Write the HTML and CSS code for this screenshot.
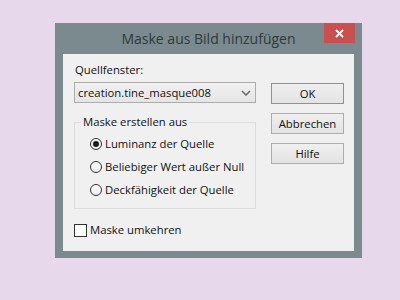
FILE: index.html
```html
<!DOCTYPE html>
<html lang="de">
<head>
    <meta charset="UTF-8">
    <title>Maske aus Bild hinzufügen</title>
    <link rel="stylesheet" href="styles.css">
</head>
<body>
    <div class="dialog">
        <div class="titlebar">
            <span class="title">Maske aus Bild hinzufügen</span>
            <span class="close">
                <svg width="9" height="9" viewBox="0 0 9 9"><path d="M1 1 L8 8 M8 1 L1 8" stroke="#fff" stroke-width="1.8"/></svg>
            </span>
        </div>
        <div class="client">
            <div class="main">
                <div class="label">Quellfenster:</div>
                <div class="select">
                    <span>creation.tine_masque008</span>
                    <svg width="10" height="6" viewBox="0 0 10 6"><path d="M1 1 L5 5 L9 1" fill="none" stroke="#6b6b6b" stroke-width="1.6"/></svg>
                </div>
                <fieldset class="group">
                    <legend>Maske erstellen aus</legend>
                    <div class="radio-row"><span class="radio checked"></span>Luminanz der Quelle</div>
                    <div class="radio-row"><span class="radio"></span>Beliebiger Wert außer Null</div>
                    <div class="radio-row"><span class="radio"></span>Deckfähigkeit der Quelle</div>
                </fieldset>
                <div class="check-row"><span class="checkbox"></span>Maske umkehren</div>
            </div>
            <div class="buttons">
                <div class="btn default">OK</div>
                <div class="btn">Abbrechen</div>
                <div class="btn">Hilfe</div>
            </div>
        </div>
    </div>
</body>
</html>
```

FILE: styles.css
```css
body {
    margin: 0;
    padding: 23px 0 0 55px;
    background: #e7d8eb;
    font-family: 'Open Sans', 'Noto Sans', sans-serif;
    font-size: 11.3px;
    color: #111;
}
.dialog {
    width: 291px;
    background: #7a8a8e;
    padding: 0 8px 7px 8px;
}
.titlebar {
    height: 31px;
    display: grid;
    grid-template-columns: 1fr auto 1fr;
}
.title {
    grid-column: 2;
    font-size: 14px;
    line-height: 31px;
    color: #2f3a3c;
}
.close {
    grid-column: 3;
    justify-self: end;
    width: 31px;
    height: 20px;
    margin-right: -1px;
    background: #c75050;
    display: flex;
    align-items: center;
    justify-content: center;
}
.close svg { display: block; }
.client {
    background: #f0f0f0;
    height: 197px;
    box-sizing: border-box;
    padding: 8px 10px 0 11px;
    display: grid;
    grid-template-columns: 182px 73px;
    column-gap: 15px;
    align-items: start;
}
.label {
    line-height: 16px;
    padding-left: 1px;
}
.select {
    margin-top: 4px;
    height: 21px;
    box-sizing: border-box;
    border: 1px solid #acacac;
    background: linear-gradient(#f0f0f0, #e5e5e5);
    display: flex;
    align-items: center;
    justify-content: space-between;
    padding: 0 4px 0 3px;
}
.select svg { display: block; }
.group {
    margin: 11px 0 0 0;
    padding: 0 0 7px 6px;
    border: 1px solid #dcdcdc;
    min-width: 0;
}
.group legend {
    padding: 0 2px;
    line-height: 16px;
}
.radio-row {
    height: 23px;
    display: flex;
    align-items: center;
    padding-left: 9px;
}
.radio-row:first-of-type { margin-top: 2px; }
.radio {
    width: 12px;
    height: 12px;
    box-sizing: border-box;
    border: 1px solid #333;
    border-radius: 50%;
    background: linear-gradient(#fdfdfd, #ececec);
    margin-right: 3px;
    display: flex;
    align-items: center;
    justify-content: center;
}
.radio.checked::after {
    content: "";
    width: 6px;
    height: 6px;
    border-radius: 50%;
    background: #1b1b1b;
}
.check-row {
    margin-top: 13px;
    line-height: 16px;
    display: flex;
    align-items: center;
}
.checkbox {
    width: 13px;
    height: 13px;
    box-sizing: border-box;
    border: 1px solid #333;
    background: #fff;
    margin-right: 3px;
}
.buttons {
    margin-top: 21px;
    display: flex;
    flex-direction: column;
    gap: 9px;
}
.btn {
    height: 21px;
    box-sizing: border-box;
    border: 1px solid #adadad;
    background: linear-gradient(#efefef, #e3e3e3);
    text-align: center;
    line-height: 19px;
}
.btn.default {
    border-color: #5c9fd8;
}
```
